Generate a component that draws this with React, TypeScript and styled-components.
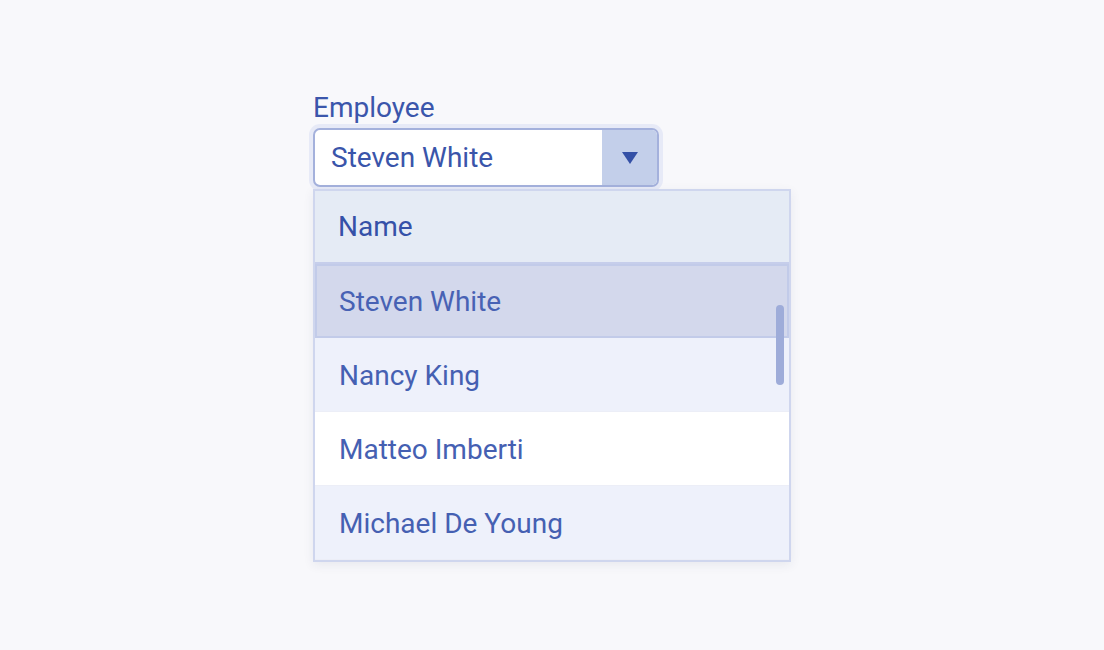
import React from "react";
import styled, { createGlobalStyle } from "styled-components";

const Global = createGlobalStyle`
  html, body { margin: 0; padding: 0; }
  body {
    background: #f8f8fb;
    font-family: Roboto, "Noto Sans", "Liberation Sans", sans-serif;
    -webkit-font-smoothing: antialiased;
  }
`;

const Page = styled.div`
  display: flex;
  justify-content: center;
  padding-top: 92px;
  height: 650px;
  box-sizing: border-box;
`;

const Field = styled.div`
  width: 478px;
  display: flex;
  flex-direction: column;
  align-items: flex-start;
`;

const Label = styled.label`
  font-size: 28px;
  line-height: 32px;
  color: #3b56ab;
  margin-bottom: 4px;
`;

const Combo = styled.div`
  width: 346px;
  height: 59px;
  box-sizing: border-box;
  display: flex;
  border: 2px solid #a4b1dc;
  border-radius: 7px;
  background: #ffffff;
  box-shadow: 0 0 0 4px #e7eaf7;
  overflow: hidden;
`;

const Value = styled.div`
  flex: 1;
  display: flex;
  align-items: center;
  padding-left: 16px;
  font-size: 28px;
  color: #3a55aa;
`;

const Toggle = styled.div`
  width: 55px;
  background: #c3cfea;
  display: flex;
  align-items: center;
  justify-content: center;
`;

const Popup = styled.div`
  position: relative;
  margin-top: 2px;
  width: 478px;
  box-sizing: border-box;
  border: 2px solid #cfd6ee;
  background: #ffffff;
  box-shadow: 0 3px 10px rgba(40, 50, 90, 0.08);
`;

const Header = styled.div`
  height: 71px;
  display: flex;
  align-items: center;
  padding-left: 23px;
  background: #e5ebf5;
  border-bottom: 2px solid #c6ceeb;
  font-size: 28px;
  color: #3551a8;
`;

const Row = styled.div<{ $bg: string; $selected?: boolean; $h: number }>`
  height: ${(p) => p.$h}px;
  box-sizing: border-box;
  display: flex;
  align-items: center;
  padding-left: ${(p) => (p.$selected ? 22 : 24)}px;
  padding-top: ${(p) => (p.$selected ? 0 : 2)}px;
  background: ${(p) => p.$bg};
  border: ${(p) => (p.$selected ? "2px solid #c2cbe9" : "none")};
  border-bottom: ${(p) => (p.$selected ? "2px solid #c2cbe9" : "1px solid #eceef7")};
  font-size: 28px;
  color: ${(p) => (p.$selected ? "#4862b4" : "#4560b2")};
`;

const Thumb = styled.div`
  position: absolute;
  right: 5px;
  top: 114px;
  width: 8px;
  height: 80px;
  border-radius: 4px;
  background: #9eacd9;
`;

const rows = [
  { name: "Steven White", bg: "#d3d8ec", selected: true, h: 74 },
  { name: "Nancy King", bg: "#eef1fb", h: 74 },
  { name: "Matteo Imberti", bg: "#ffffff", h: 74 },
  { name: "Michael De Young", bg: "#eef1fb", h: 74 },
];

export default function App() {
  return (
    <>
      <Global />
      <Page>
        <Field>
          <Label>Employee</Label>
          <Combo>
            <Value>Steven White</Value>
            <Toggle>
              <svg width="16" height="12" viewBox="0 0 16 12">
                <path d="M0 0 L16 0 L8 12 Z" fill="#3450a6" />
              </svg>
            </Toggle>
          </Combo>
          <Popup>
            <Header>Name</Header>
            {rows.map((r) => (
              <Row key={r.name} $bg={r.bg} $selected={r.selected} $h={r.h}>
                {r.name}
              </Row>
            ))}
            <Thumb />
          </Popup>
        </Field>
      </Page>
    </>
  );
}
